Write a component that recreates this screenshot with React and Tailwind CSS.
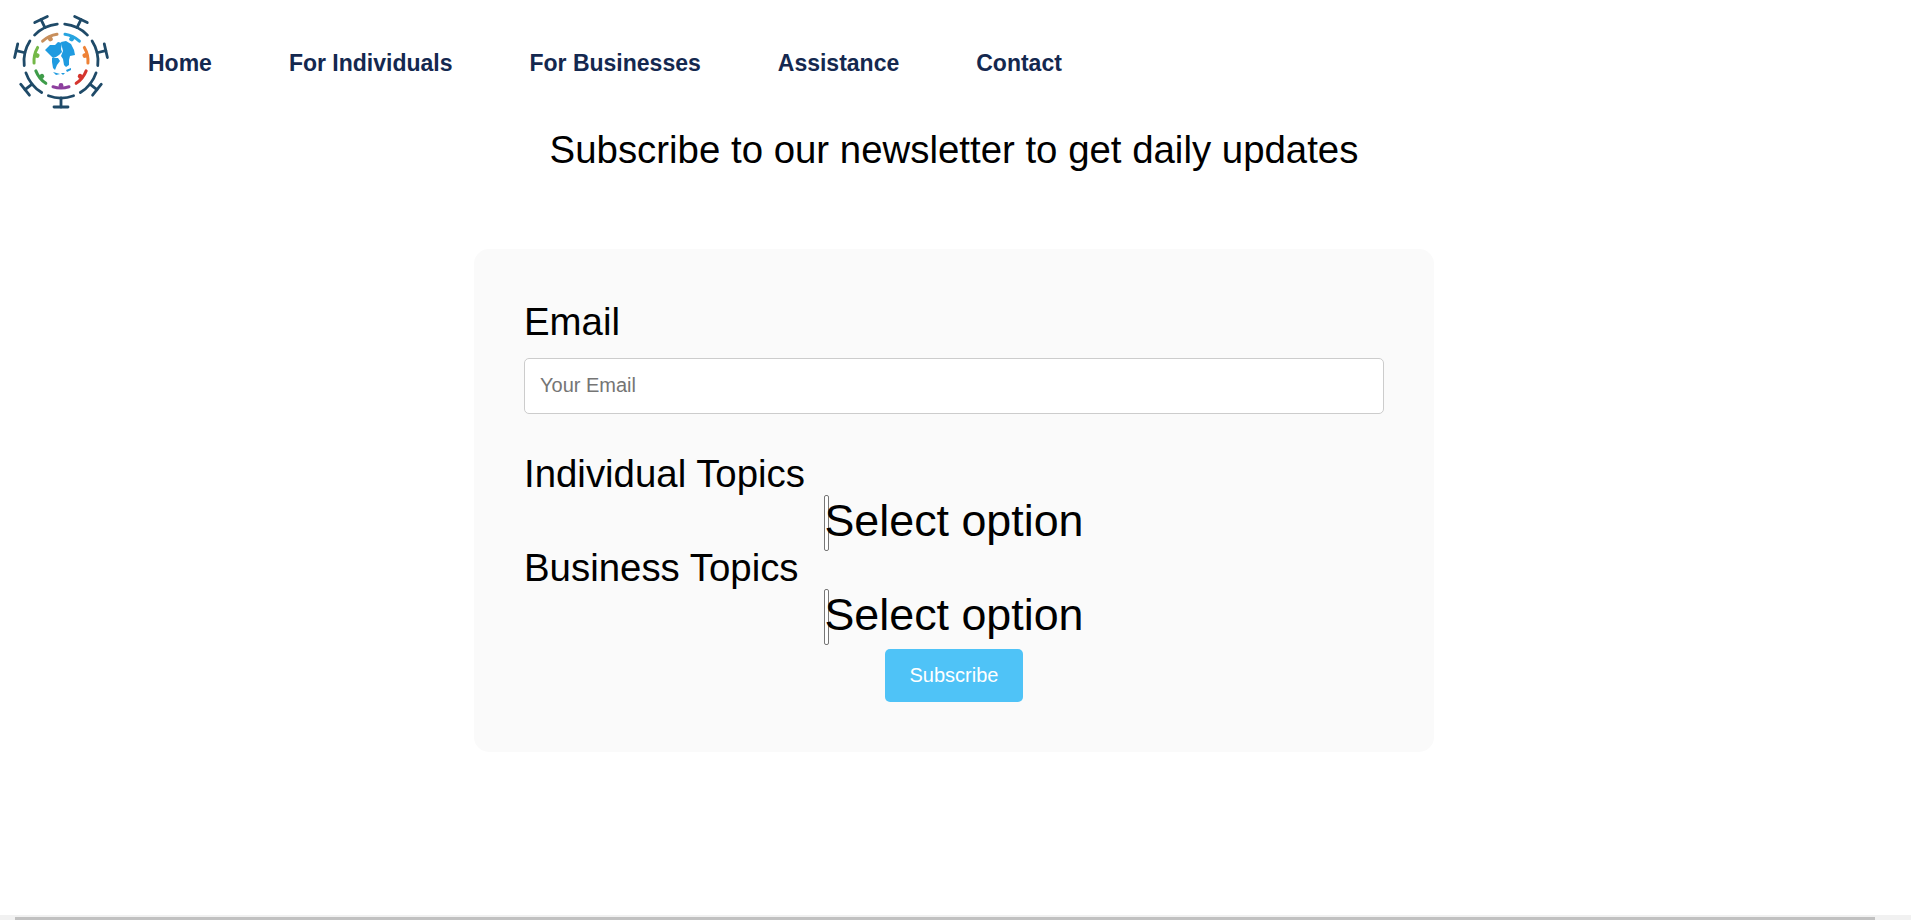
import React from 'react'

const navLinks = ['Home', 'For Individuals', 'For Businesses', 'Assistance', 'Contact']

const spikeAngles = [180, 231.4, 282.9, 334.3, 25.7, 77.1, 128.6]

const people = [
  { angle: -25.7, color: '#c88f5c' },
  { angle: 25.7, color: '#27a4e0' },
  { angle: 77.1, color: '#ee8236' },
  { angle: 128.6, color: '#d5352e' },
  { angle: 180, color: '#8d3f9e' },
  { angle: 231.4, color: '#3f9c4a' },
  { angle: 282.9, color: '#74b848' },
]

// all angles are clockwise from 12 o'clock, around the logo's centre at 61,61
function Logo() {
  return (
    <svg width="120" height="120" viewBox="0 0 120 120" className="w-[120px] h-[120px] shrink-0 self-start">
      {spikeAngles.map((a) => (
        <g key={a} transform={`rotate(${a} 61 61)`} stroke="#1f4a68" strokeWidth="2.8" strokeLinecap="round" fill="none">
          <path d="M48.4 26.2 A37 37 0 0 1 73.6 26.2" />
          <path d="M61 24 V15" />
          <path d="M54 15 H68" />
        </g>
      ))}
      {people.map((p) => (
        <g key={p.angle} transform={`rotate(${p.angle} 61 61)`}>
          <path d="M53 35.2 A27 27 0 0 1 69 35.2" stroke={p.color} strokeWidth="3" strokeLinecap="round" fill="none" />
          <circle cx="61" cy="36.5" r="2.4" fill={p.color} />
        </g>
      ))}
      <g fill="#1f9be0">
        <path d="M45 50 L50 45 L55 45 L58 42 L62 43 L61 49 L62 52 L59 55 L56 57 L53 58 L49 54 Z" />
        <path d="M52 58 L58 58 L60 61 L57 65 L55 70 L53 68 L52 62 Z" />
        <path d="M61 42 L66 41 L71 44 L74 50 L75 55 L70 56 L69 60 L69 65 L66 67 L64 65 L63 59 L61 56 L63 51 L62 47 Z" />
        <path d="M66 70 L71 68 L71 70 L67 72 Z" />
        <path d="M53 72 L60 74 L56 75 Z" />
        <path d="M61 73 L65 73 L63 75 Z" />
      </g>
    </svg>
  )
}

function FakeSelect() {
  return (
    <div className="flex justify-center h-[52px] -mt-[2px]">
      <div className="flex items-center">
        <span className="w-[5px] h-[56px] mt-[5px] border border-[#767676] rounded-[2px] bg-white -mr-[5px]" />
        <span className="text-[44.8px] leading-[56px] text-black">Select option</span>
      </div>
    </div>
  )
}

export default function App() {
  return (
    <div className="h-screen flex flex-col bg-white overflow-hidden font-['Liberation_Sans',Arial,sans-serif]">
      <div className="flex-1 pr-[3px]">
        <header className="flex items-center h-[127px]">
          <Logo />
          <nav className="flex items-center gap-[77px] text-[23px] font-bold text-[#14284f] pl-[28px]">
            {navLinks.map((link) => (
              <a key={link}>{link}</a>
            ))}
          </nav>
        </header>

        <h2 className="text-center text-[38.4px] leading-[44px] text-black mt-[1px]">
          Subscribe to our newsletter to get daily updates
        </h2>

        <form className="w-[960px] mx-auto mt-[77px] px-[50px] pt-[51px] pb-[50px] bg-[#fafafa] rounded-[15px]">
          <label className="block text-[38.4px] leading-[44px] text-black">Email</label>
          <input
            placeholder="Your Email"
            className="block w-full h-[56px] mt-[14px] px-[15px] pb-[2px] bg-white border border-[#cccccc] rounded-[5px] text-[20px] placeholder:text-[#757575]"
          />
          <label className="block text-[38.4px] leading-[44px] text-black mt-[38px]">Individual Topics</label>
          <FakeSelect />
          <label className="block text-[38.4px] leading-[44px] text-black">Business Topics</label>
          <FakeSelect />
          <button type="button" className="block mx-auto mt-[9px] w-[138px] h-[53px] pb-[2px] bg-[#4fc3f7] rounded-[5px] text-white text-[20px]">
            Subscribe
          </button>
        </form>
      </div>

      {/* horizontal scrollbar */}
      <div className="h-[5px] bg-[#f1f1f1] pl-[15px] pr-[36px] pt-[2px]">
        <div className="h-full bg-[#c1c1c1]" />
      </div>
    </div>
  )
}
